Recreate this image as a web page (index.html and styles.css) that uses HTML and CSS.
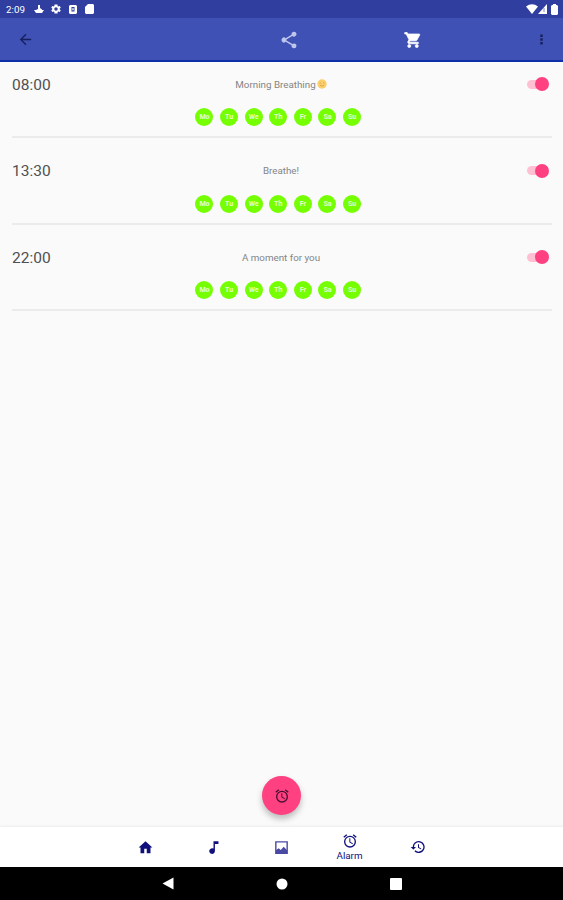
FILE: index.html
```html
<!DOCTYPE html>
<html lang="en">
<head>
    <meta charset="UTF-8">
    <meta name="viewport" content="width=device-width, initial-scale=1.0">
    <title>Alarm</title>
    <link rel="stylesheet" href="styles.css">
</head>
<body>
    <div class="status-bar">
        <span class="clock">2:09</span>
        <svg width="10" height="10" viewBox="0 0 10 10"><path d="M4 1h2v3l2 1.500V6h2L8 9H2L0 6h2l2-1z"/></svg>
        <svg class="gear" width="12" height="12" viewBox="0 0 24 24"><path fill-rule="evenodd" d="M19.400 13a7.500 7.500 0 0 0 0-2l2.100-1.700-2-3.400-2.500 1a7.500 7.500 0 0 0-1.700-1L15 3H9l-.3 2.900a7.500 7.500 0 0 0-1.700 1l-2.500-1-2 3.400L4.600 11a7.500 7.500 0 0 0 0 2l-2.100 1.700 2 3.400 2.500-1a7.500 7.500 0 0 0 1.700 1L9 21h6l.3-2.900a7.500 7.500 0 0 0 1.700-1l2.500 1 2-3.400zM12 15.500a3.500 3.500 0 1 1 0-7 3.500 3.500 0 0 1 0 7z"/></svg>
        <svg class="box" width="8" height="9" viewBox="0 0 8 9"><path fill-rule="evenodd" d="M1 0h6l1 1v7L7 9H1L0 8V1zM2.500 2v4.500h3V2zM3.300 3.200h1.400v2H3.300z"/></svg>
        <svg class="card" width="9" height="10" viewBox="0 0 9 10"><path d="M3 0h5l1 1v8l-1 1H1L0 9V3z"/></svg>
        <div class="signals">
            <svg width="12" height="10" viewBox="0 0 12 10"><path d="M0 2.500Q6-2 12 2.500L6 10z"/></svg>
            <svg width="9" height="10" viewBox="0 0 9 10"><path d="M0 10L9 0v10z"/><path class="signal-mark" d="M6 4v4"/></svg>
            <svg class="battery" width="7" height="11" viewBox="0 0 7 11"><path d="M2 0h3v1h1l1 1v8l-1 1H1l-1-1V2l1-1h1z"/></svg>
        </div>
    </div>

    <header class="toolbar">
        <svg class="back" width="17" height="17" viewBox="0 0 24 24"><path d="M20 11H7.830l5.590-5.590L12 4l-8 8 8 8 1.410-1.410L7.830 13H20z"/></svg>
        <svg class="share" width="20" height="20" viewBox="0 0 24 24"><path d="M18 16.080c-.76 0-1.440.3-1.960.77L8.910 12.700a3.300 3.300 0 0 0 0-1.390l7.050-4.110A3 3 0 1 0 15 5c0 .24.040.470.090.7L8.040 9.810a3 3 0 1 0 0 4.380l7.120 4.160a2.920 2.920 0 1 0 2.840-2.270z"/></svg>
        <svg class="cart" width="18" height="18" viewBox="0 0 24 24"><path d="M7 18a2 2 0 1 0 0 4 2 2 0 0 0 0-4zM1 2v2h2l3.600 7.590-1.350 2.450C4.520 15.370 5.480 17 7 17h12v-2H7.420l-.22-.37.900-1.630h7.450a2 2 0 0 0 1.750-1.030l3.580-6.490A1 1 0 0 0 20 4H5.210l-.94-2zM17 18a2 2 0 1 0 0 4 2 2 0 0 0 0-4z"/></svg>
        <svg class="more" width="15" height="15" viewBox="0 0 24 24"><path d="M10 4h4v4h-4zM10 10h4v4h-4zM10 16h4v4h-4z"/></svg>
    </header>

    <main class="alarms">
        <section class="alarm">
            <div class="alarm-top">
                <span class="time">08:00</span>
                <span class="label">Morning Breathing<svg class="emoji" width="10" height="10" viewBox="0 0 10 10"><circle cx="5" cy="5" r="4.700" fill="#fbcf68"/><path d="M2.500 4h1.500M6 4h1.500M3 6.300q2 1.500 4 0" stroke="#dfa65a" fill="none"/></svg></span>
                <span class="switch"></span>
            </div>
            <div class="days"><span>Mo</span><span>Tu</span><span>We</span><span>Th</span><span>Fr</span><span>Sa</span><span>Su</span></div>
        </section>
        <section class="alarm">
            <div class="alarm-top">
                <span class="time">13:30</span>
                <span class="label">Breathe!</span>
                <span class="switch"></span>
            </div>
            <div class="days"><span>Mo</span><span>Tu</span><span>We</span><span>Th</span><span>Fr</span><span>Sa</span><span>Su</span></div>
        </section>
        <section class="alarm">
            <div class="alarm-top">
                <span class="time">22:00</span>
                <span class="label">A moment for you</span>
                <span class="switch"></span>
            </div>
            <div class="days"><span>Mo</span><span>Tu</span><span>We</span><span>Th</span><span>Fr</span><span>Sa</span><span>Su</span></div>
        </section>
    </main>

    <div class="fab">
        <svg width="16" height="16" viewBox="0 0 24 24"><path d="M22 5.720l-4.600-3.860-1.290 1.530 4.600 3.860zM7.880 3.390L6.600 1.860 2 5.710l1.290 1.530zM12.500 8H11v6l4.750 2.850.75-1.230-4-2.370zM12 4a9 9 0 1 0 0 18 9 9 0 0 0 0-18zm0 16a7 7 0 1 1 0-14 7 7 0 0 1 0 14z"/></svg>
    </div>

    <nav class="tabs">
        <div class="tab"><svg width="15" height="15" viewBox="0 0 24 24"><path d="M10 21v-7h4v7h6v-9h3L12 2 1 12h3v9z"/></svg></div>
        <div class="tab"><svg width="17" height="17" viewBox="0 0 24 24"><path d="M12 3v10.550A4 4 0 1 0 14 17V7h5V3z"/></svg></div>
        <div class="tab"><svg class="picture" width="17" height="17" viewBox="0 0 24 24"><path class="frame" d="M4 4h16v16H4z"/><path d="M4 16l4-3 3 2.500 4-4.500 5 5v4H4z"/></svg></div>
        <div class="tab active">
            <svg width="16" height="16" viewBox="0 0 24 24"><path d="M22 5.720l-4.600-3.860-1.290 1.530 4.600 3.860zM7.880 3.390L6.600 1.860 2 5.710l1.290 1.530zM12.500 8H11v6l4.750 2.850.75-1.230-4-2.370zM12 4a9 9 0 1 0 0 18 9 9 0 0 0 0-18zm0 16a7 7 0 1 1 0-14 7 7 0 0 1 0 14z"/></svg>
            <span>Alarm</span>
        </div>
        <div class="tab"><svg width="16" height="16" viewBox="0 0 24 24"><path d="M13 3a9 9 0 0 0-9 9H1l3.890 3.890.070.140L9 12H6a7 7 0 1 1 2.060 4.940l-1.420 1.420A9 9 0 1 0 13 3zm-1 5v5l4.280 2.540.720-1.210-3.500-2.080V8z"/></svg></div>
    </nav>

    <div class="system-nav">
        <div><svg width="12" height="13" viewBox="0 0 12 13"><path d="M11.500.5v12L.5 6.500z"/></svg></div>
        <div><svg width="12" height="12" viewBox="0 0 12 12"><circle cx="6" cy="6" r="5.500"/></svg></div>
        <div><svg width="12" height="12" viewBox="0 0 12 12"><rect width="12" height="12" rx="1"/></svg></div>
    </div>
</body>
</html>
```
FILE: styles.css
```css
body {
    display: flex;
    flex-direction: column;
    height: 900px;
    margin: 0;
    overflow: hidden;
    font-family: Roboto, sans-serif;
    background-color: #fafafa;
    color: #555;
}
svg {
    display: block;
    flex: none;
}
.status-bar {
    display: flex;
    align-items: center;
    flex: none;
    height: 18px;
    padding: 0 5px 0 6px;
    background-color: #303f9f;
    fill: #fff;
}
.clock {
    width: 28px;
    font-size: 9.800px;
    color: #fff;
}
.gear {
    margin-left: 6px;
}
.box {
    margin-left: 7px;
}
.card {
    margin-left: 8px;
}
.signals {
    display: flex;
    align-items: center;
    margin-left: auto;
}
.signal-mark {
    stroke: #7d86c4;
}
.battery {
    margin-left: 4px;
}
.toolbar {
    display: flex;
    align-items: center;
    flex: none;
    box-sizing: border-box;
    height: 44px;
    padding: 1px 14px 0 17px;
    background-color: #3f51b5;
    border-bottom: 2px solid #0d2fa8;
}
.back, .more {
    fill: #17205e;
}
.share {
    margin-left: 245px;
    fill: #bfc6ec;
}
.cart {
    margin-left: 105px;
    fill: #fff;
    /* heavier basket */
    stroke: #fff;
    stroke-width: 1;
}
.more {
    margin-left: auto;
}
.alarms {
    flex: 1;
}
.alarm {
    box-sizing: border-box;
    height: 76px;
    margin: 0 11px 10.500px 12px;
    padding-top: 11px;
    border-bottom: 2px solid #ebebeb;
}
.alarm-top {
    display: grid;
    grid-template-columns: 60px 1fr 60px;
    align-items: center;
    height: 22px;
}
.time {
    padding-top: 1px;
    font-size: 15.500px;
    color: #505050;
}
.label {
    display: flex;
    align-items: center;
    justify-content: center;
    margin-right: 2px;
    font-size: 9.800px;
    color: #858585;
}
.emoji {
    margin-left: 1px;
}
.switch {
    position: relative;
    justify-self: end;
    width: 21px;
    height: 9px;
    margin-right: 4px;
    border-radius: 5px;
    background-color: #ffc0d4;
}
.switch::after {
    content: "";
    position: absolute;
    top: -2.500px;
    right: -1px;
    width: 14px;
    height: 14px;
    border-radius: 50%;
    background-color: #ff4081;
}
.days {
    display: flex;
    justify-content: center;
    gap: 6.600px;
    margin: 13px 7.500px 0 0;
}
.days span {
    width: 18px;
    height: 18px;
    border-radius: 50%;
    background-color: #76ff03;
    font-size: 7px;
    font-weight: bold;
    line-height: 18px;
    text-align: center;
    color: #e6ffcc;
}
.fab {
    display: flex;
    align-items: center;
    justify-content: center;
    align-self: center;
    flex: none;
    width: 39px;
    height: 39px;
    margin-bottom: 12px;
    border-radius: 50%;
    background-color: #ff4081;
    box-shadow: 0 4px 6px rgba(0, 0, 0, 0.25);
    fill: #4a0f30;
}
.tabs {
    display: flex;
    justify-content: center;
    flex: none;
    height: 40px;
    background-color: #fff;
    box-shadow: 0 -1px 2px rgba(0, 0, 0, 0.06);
    fill: #10107c;
}
.tab {
    display: flex;
    flex-direction: column;
    align-items: center;
    justify-content: center;
    width: 68px;
}
.picture {
    fill: #4a4aa5;
}
.frame {
    fill: none;
    stroke: #4a4aa5;
    stroke-width: 2;
}
.active span {
    margin-top: 1px;
    font-size: 9.800px;
    line-height: 12px;
    color: #10107c;
}
.system-nav {
    display: flex;
    align-items: center;
    justify-content: center;
    flex: none;
    height: 33px;
    background-color: #000;
    fill: #fff;
}
.system-nav div {
    display: flex;
    justify-content: center;
    width: 114px;
}
```
